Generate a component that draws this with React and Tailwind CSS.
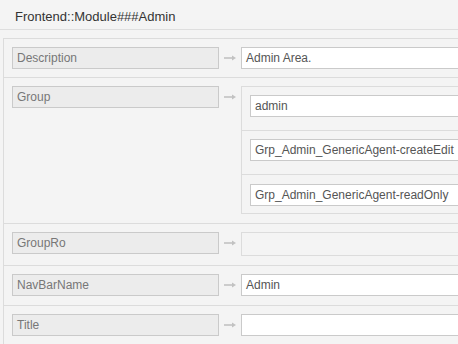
import React from "react";

function Arrow() {
  return (
    <div className="w-[22px] h-[22px] flex items-center justify-center shrink-0">
      <svg width="12" height="6" viewBox="0 0 12 6">
        <line x1="0" y1="3" x2="9" y2="3" stroke="#c2c2c2" strokeWidth="1.6" />
        <polygon points="8,0.5 12,3 8,5.5" fill="#c2c2c2" />
      </svg>
    </div>
  );
}

function Label({ children }) {
  return (
    <div className="w-[207px] h-[22px] shrink-0 border border-[#cacaca] bg-[#ececec] text-[12px] leading-[20px] text-[#777] pl-[4px]">
      {children}
    </div>
  );
}

function Input({ children }) {
  return (
    <div className="w-[400px] h-[22px] shrink-0 border border-[#cacaca] bg-white text-[12px] leading-[20px] text-[#555] pl-[4px]">
      {children}
    </div>
  );
}

export default function App() {
  return (
    <div className="w-[458px] h-[344px] overflow-hidden bg-[#f4f4f4] font-['Liberation_Sans',Arial,sans-serif]">
      <div className="h-[30px] border-b border-[#dedede] pl-[15px] pt-[9px] text-[13px] leading-[15px] text-[#333] whitespace-nowrap">
        Frontend::Module###Admin
      </div>
      <div className="ml-[3px] mt-[8px] w-[700px] border border-[#dcdcdc]">
        <div className="flex items-start px-2 pt-2 pb-2 border-b border-[#dcdcdc]">
          <Label>Description</Label>
          <Arrow />
          <Input>Admin Area.</Input>
        </div>
        <div className="flex items-start px-2 pt-2 pb-[9px] border-b border-[#dcdcdc]">
          <Label>Group</Label>
          <Arrow />
          <div className="w-[420px] shrink-0 border border-[#dcdcdc]">
            <div className="px-2 pt-2 pb-[13px] border-b border-[#dcdcdc]">
              <Input>admin</Input>
            </div>
            <div className="px-2 pt-2 pb-[13px] border-b border-[#dcdcdc]">
              <Input>Grp_Admin_GenericAgent-createEdit</Input>
            </div>
            <div className="px-2 pt-[9px] pb-[7px]">
              <Input>Grp_Admin_GenericAgent-readOnly</Input>
            </div>
          </div>
        </div>
        <div className="flex items-start px-2 pt-2 pb-[9px] border-b border-[#dcdcdc]">
          <Label>GroupRo</Label>
          <Arrow />
          <div className="w-[420px] h-[24px] shrink-0 border border-[#dcdcdc] bg-[#f4f4f4]" />
        </div>
        <div className="flex items-start px-2 pt-2 pb-[9px] border-b border-[#dcdcdc]">
          <Label>NavBarName</Label>
          <Arrow />
          <Input>Admin</Input>
        </div>
        <div className="flex items-start px-2 pt-2 pb-[9px]">
          <Label>Title</Label>
          <Arrow />
          <Input></Input>
        </div>
      </div>
    </div>
  );
}
